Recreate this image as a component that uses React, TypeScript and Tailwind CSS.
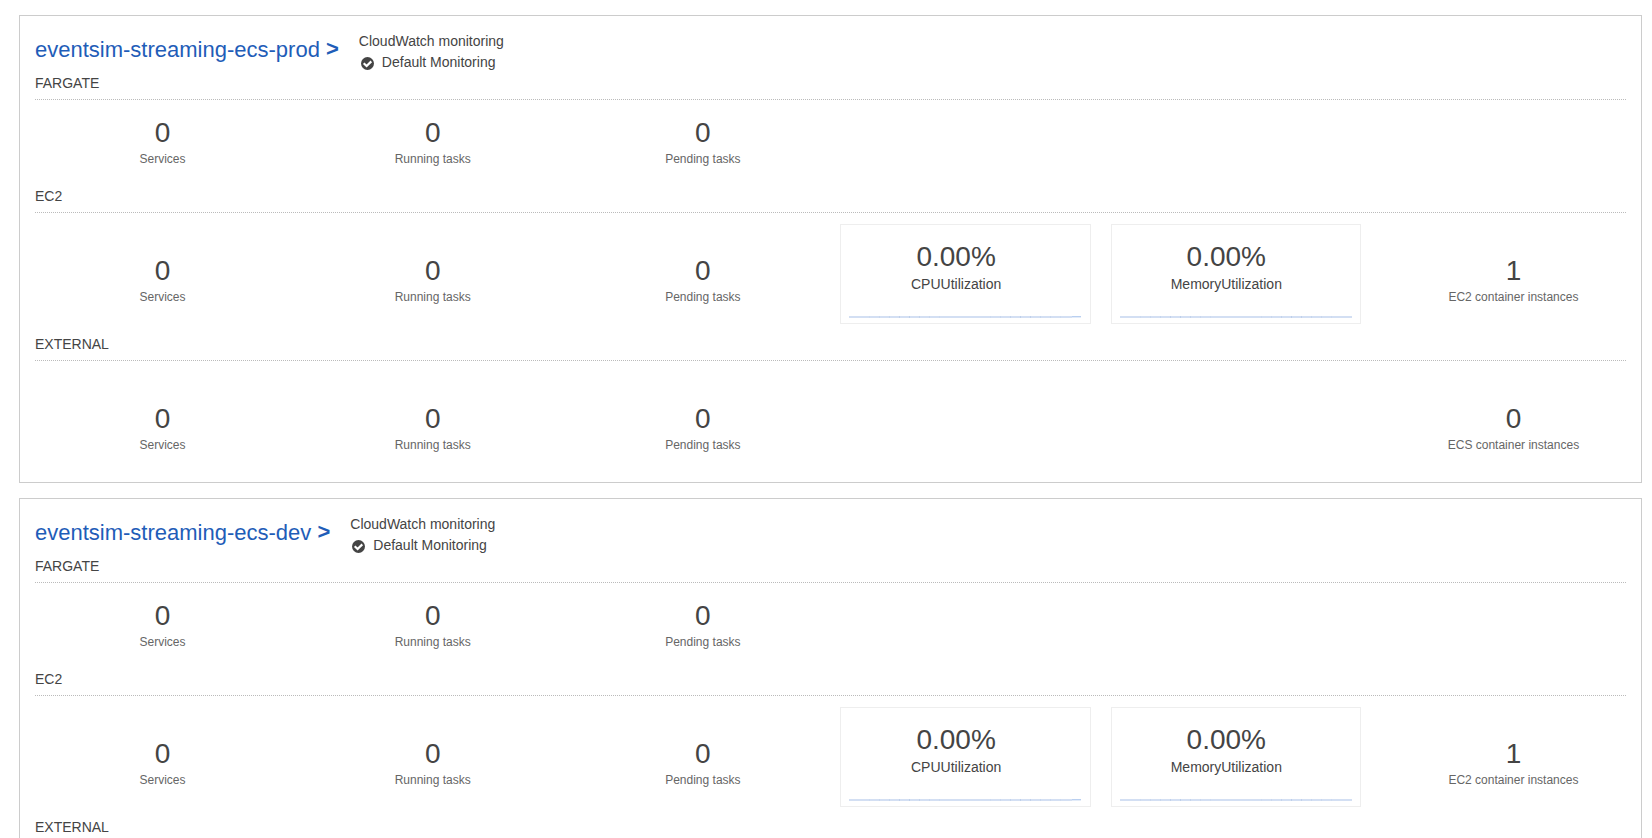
const sections = [
  { name: "FARGATE", height: "h-[86px]", pt: "pt-4", metrics: false, instances: null },
  { name: "EC2", height: "h-[121px]", pt: "pt-[41px]", metrics: true, instances: { n: "1", label: "EC2 container instances" } },
  { name: "EXTERNAL", height: "h-[105px]", pt: "pt-[41px]", metrics: false, instances: { n: "0", label: "ECS container instances" } },
];

// Joints of the sparkline segments: x position and strength
const joints = [
  [20, 0.2], [30, 0.3], [40, 0.4], [50, 0.6], [60, 0.7], [70, 0.5], [80, 0.3], [90, 0.2],
  [141, 0.2], [151, 0.3], [161, 0.5], [171, 0.7], [181, 0.6], [191, 0.4], [201, 0.3], [211, 0.2],
];

function Stat({ n, label, pt }: { n: string; label: string; pt: string }) {
  return (
    <div className={`flex flex-col items-center ${pt}`}>
      <div className="text-[28px] leading-[33px] text-[#444]">{n}</div>
      <div className="mt-px text-[12px] leading-[18px] text-[#666]">{label}</div>
    </div>
  );
}

function Metric({ label, tail }: { label: string; tail?: boolean }) {
  return (
    <div className="ml-[-5.2px] mt-[11px] h-[100px] w-[250.5px] border border-[#eee]">
      <div className="flex flex-col items-center pr-[19px] pt-[15px]">
        <div className="text-[28px] leading-[33px] text-[#444]">0.00%</div>
        <div className="mt-px text-[14px] leading-5 text-[#444]">{label}</div>
      </div>
      <svg className="ml-2 mt-[22px] block h-[2px] w-[232px] bg-[#d3dff3]" viewBox="0 0 232 2">
        {joints.map(([x, o]) => (
          <rect key={x} x={x} width="1" height="2" fill="#b4c7e6" opacity={o} />
        ))}
        {tail && <rect x="223" width="9" height="1" fill="#b9cff0" />}
        {tail && <rect x="223" y="1" width="9" height="1" fill="#e3ecf9" />}
      </svg>
    </div>
  );
}

function Cluster({ name }: { name: string }) {
  return (
    <section className="h-[468px] shrink-0 border border-[#ccc] px-[15px]">
      <header className="flex h-[57px] pt-[15px]">
        <h2 className="flex whitespace-pre pt-1 text-[22px] leading-[29px] text-[#1f5db8]">
          <span>{name} </span>
          <b className="-mt-px">&gt;</b>
        </h2>
        <div className="ml-5 text-[14px] leading-[21px] text-[#444]">
          <div>CloudWatch monitoring</div>
          <div className="flex items-center">
            <svg className="ml-[2.2px] mr-[7.8px] mt-px size-[13px]" viewBox="0 0 13 13">
              <circle cx="6.5" cy="6.5" r="6.5" fill="#444" />
              <path d="M2.7 6.2 5.6 9 10.3 4.4" fill="none" stroke="#fff" strokeWidth="2.2" />
            </svg>
            Default Monitoring
          </div>
        </div>
      </header>
      {sections.map((s) => (
        <div key={s.name}>
          <h3 className="h-[27px] border-b border-dotted border-[#bbb] text-[14px] leading-5 text-[#444]">{s.name}</h3>
          <div className={`grid grid-cols-[repeat(6,255px)] gap-x-[15.2px] ${s.height}`}>
            <Stat n="0" label="Services" pt={s.pt} />
            <Stat n="0" label="Running tasks" pt={s.pt} />
            <Stat n="0" label="Pending tasks" pt={s.pt} />
            {s.metrics ? <Metric label="CPUUtilization" tail /> : <span />}
            {s.metrics ? <Metric label="MemoryUtilization" /> : <span />}
            {s.instances && <Stat n={s.instances.n} label={s.instances.label} pt={s.pt} />}
          </div>
        </div>
      ))}
    </section>
  );
}

export default function App() {
  return (
    <main className="flex h-[838px] flex-col gap-[15px] overflow-hidden bg-white pl-[19px] pr-[10px] pt-[15px] font-['Liberation_Sans',Arial,sans-serif]">
      <Cluster name="eventsim-streaming-ecs-prod" />
      <Cluster name="eventsim-streaming-ecs-dev" />
    </main>
  );
}
